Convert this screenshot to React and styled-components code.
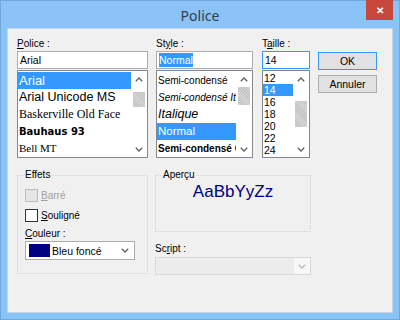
import styled, { createGlobalStyle } from "styled-components";

const GlobalStyle = createGlobalStyle`
  body {
    margin: 0;
    font-family: "Liberation Sans", Arial, sans-serif;
    font-size: 10px;
    color: #000;
  }
`;

const Chevron = ({ up, color = "#606060" }) => (
  <svg width="8" height="5" viewBox="0 0 8 5">
    <path
      d={up ? "M0.8 4.2 L4 1 L7.2 4.2" : "M0.8 0.8 L4 4 L7.2 0.8"}
      fill="none"
      stroke={color}
      strokeWidth="1.3"
    />
  </svg>
);

const fonts = [
  { name: "Arial", family: '"Liberation Sans"', size: 13, selected: true },
  { name: "Arial Unicode MS", family: '"Liberation Sans"', size: 12.5 },
  { name: "Baskerville Old Face", family: '"Liberation Serif"', size: 12 },
  { name: "Bauhaus 93", family: '"DejaVu Sans"', size: 10, weight: 900 },
  { name: "Bell MT", family: '"Liberation Serif"', size: 11 },
];

const styles = [
  { name: "Semi-condensé", size: 10 },
  { name: "Semi-condensé Italique", size: 10, italic: true },
  { name: "Italique", size: 12.5, italic: true },
  { name: "Normal", size: 11.5, selected: true },
  { name: "Semi-condensé Gras", size: 10, weight: 700 },
];

const sizes = ["12", "14", "16", "18", "20", "22", "24"];

const App = () => (
  <>
    <GlobalStyle />
    <Window>
      <TitleBar>
        <Title>Police</Title>
        <CloseButton>✕</CloseButton>
      </TitleBar>
      <Panel>
        <TopRow>
          <Column $width={131}>
            <Label>
              <u>P</u>olice :
            </Label>
            <TextBox>Arial</TextBox>
            <List>
              <Items>
                {fonts.map((f) => (
                  <Item
                    key={f.name}
                    $h={17}
                    $family={f.family}
                    $size={f.size}
                    $weight={f.weight}
                    $selected={f.selected}
                  >
                    {f.name}
                  </Item>
                ))}
              </Items>
              <ScrollBar $thumbTop={5} $thumbHeight={15} />
            </List>
          </Column>
          <Column $width={97}>
            <Label>
              St<u>y</u>le :
            </Label>
            <TextBox>
              <Highlight>Normal</Highlight>
            </TextBox>
            <List>
              <Items>
                {styles.map((s) => (
                  <Item
                    key={s.name}
                    $h={17}
                    $family='"Liberation Sans"'
                    $size={s.size}
                    $weight={s.weight}
                    $italic={s.italic}
                    $selected={s.selected}
                  >
                    {s.name}
                  </Item>
                ))}
              </Items>
              <ScrollBar $thumbTop={0} $thumbHeight={18} />
            </List>
          </Column>
          <Column $width={48}>
            <Label>
              T<u>a</u>ille :
            </Label>
            <TextBox $focused>14</TextBox>
            <List>
              <Items>
                {sizes.map((s) => (
                  <Item
                    key={s}
                    $h={12}
                    $family='"Liberation Sans"'
                    $size={10.5}
                    $selected={s === "14"}
                  >
                    {s}
                  </Item>
                ))}
              </Items>
              <ScrollBar $thumbTop={14} $thumbHeight={26} />
            </List>
          </Column>
          <ButtonColumn>
            <Button $default>OK</Button>
            <Button>Annuler</Button>
          </ButtonColumn>
        </TopRow>

        <BottomRow>
          <Group $width={131} $height={106}>
            <Legend>Effets</Legend>
            <CheckRow $disabled>
              <CheckBox $disabled />
              <span>
                <u>B</u>arré
              </span>
            </CheckRow>
            <CheckRow>
              <CheckBox />
              <span>
                <u>S</u>ouligné
              </span>
            </CheckRow>
            <SmallLabel>
              <u>C</u>ouleur :
            </SmallLabel>
            <ColorSelect>
              <Swatch />
              <SelectText>Bleu foncé</SelectText>
              <Chevron />
            </ColorSelect>
          </Group>
          <RightColumn>
            <Group $width={156} $height={64}>
              <Legend>Aperçu</Legend>
              <Preview>AaBbYyZz</Preview>
            </Group>
            <ScriptLabel>
              Sc<u>r</u>ipt :
            </ScriptLabel>
            <DisabledSelect>
              <SelectArrow>
                <Chevron color="#b8b8b8" />
              </SelectArrow>
            </DisabledSelect>
          </RightColumn>
        </BottomRow>
      </Panel>
    </Window>
  </>
);

const ScrollBar = ({ $thumbTop, $thumbHeight }) => (
  <Scroll>
    <ScrollArrow>
      <Chevron up />
    </ScrollArrow>
    <Track>
      <Thumb $top={$thumbTop} $height={$thumbHeight} />
    </Track>
    <ScrollArrow>
      <Chevron />
    </ScrollArrow>
  </Scroll>
);

const Window = styled.div`
  width: 400px;
  height: 320px;
  box-sizing: border-box;
  background: #8ac4f7;
  border: 1px solid #6ea9dc;
  display: flex;
  flex-direction: column;
`;

const TitleBar = styled.div`
  position: relative;
  height: 27px;
  display: flex;
  align-items: center;
  justify-content: center;
`;

const Title = styled.div`
  font-family: "Noto Sans", "Open Sans", sans-serif;
  font-size: 14px;
  color: #333d4c;
  margin-top: 1px;
`;

const CloseButton = styled.div`
  position: absolute;
  top: -1px;
  right: 6px;
  width: 27px;
  height: 20px;
  background: #c7473c;
  color: #fff;
  font-size: 10px;
  font-weight: bold;
  display: flex;
  align-items: center;
  justify-content: center;
`;

const Panel = styled.div`
  flex: 1;
  margin: 0 6px 6px;
  background: #f0f0f0;
  border: 1px solid #c4d6e8;
  padding: 8px 0 0 9px;
  display: flex;
  flex-direction: column;
`;

const TopRow = styled.div`
  display: flex;
  align-items: flex-start;
`;

const Column = styled.div`
  width: ${(p) => p.$width}px;
  margin-right: ${(p) => (p.$width === 97 ? 9 : 8)}px;
  display: flex;
  flex-direction: column;
`;

const Label = styled.div`
  height: 14px;
  line-height: 14px;
  font-size: 10px;
  color: #000;
`;

const TextBox = styled.div`
  height: 18px;
  box-sizing: border-box;
  border: 1px solid ${(p) => (p.$focused ? "#3399ff" : "#abadb3")};
  background: #fff;
  font-size: 10.5px;
  line-height: 16px;
  padding-left: 2px;
  white-space: nowrap;
  overflow: hidden;
`;

const Highlight = styled.span`
  background: #3399ff;
  color: #fff;
  padding: 1px 0;
`;

const List = styled.div`
  margin-top: 1px;
  height: 88px;
  box-sizing: border-box;
  border: 1px solid #828790;
  background: #fff;
  display: flex;
`;

const Items = styled.div`
  flex: 1;
  min-width: 0;
  padding-top: 1px;
  overflow: hidden;
`;

const Item = styled.div`
  height: ${(p) => p.$h}px;
  line-height: ${(p) => p.$h}px;
  padding-left: 1px;
  white-space: nowrap;
  overflow: hidden;
  font-family: ${(p) => p.$family}, sans-serif;
  font-size: ${(p) => p.$size}px;
  font-weight: ${(p) => p.$weight || 400};
  font-style: ${(p) => (p.$italic ? "italic" : "normal")};
  background: ${(p) => (p.$selected ? "#3399ff" : "transparent")};
  color: ${(p) => (p.$selected ? "#fff" : "#000")};
`;

const Scroll = styled.div`
  width: 16px;
  display: flex;
  flex-direction: column;
  background: #fff;
`;

const ScrollArrow = styled.div`
  height: 16px;
  display: flex;
  align-items: center;
  justify-content: center;
`;

const Track = styled.div`
  flex: 1;
  padding: 0 2px;
`;

const Thumb = styled.div`
  margin-top: ${(p) => p.$top}px;
  height: ${(p) => p.$height}px;
  background-color: #cdcdcd;
  background-image: repeating-linear-gradient(
    45deg,
    #c4c4c4 0 1px,
    #d6d6d6 1px 2px
  );
`;

const ButtonColumn = styled.div`
  width: 59px;
  margin-top: 15px;
  display: flex;
  flex-direction: column;
  gap: 5px;
`;

const Button = styled.div`
  height: 18px;
  box-sizing: border-box;
  border: 1px solid ${(p) => (p.$default ? "#3399ff" : "#adadad")};
  background: #e1e1e1;
  display: flex;
  align-items: center;
  justify-content: center;
  font-size: 10.5px;
`;

const BottomRow = styled.div`
  display: flex;
  gap: 7px;
  margin-top: 10px;
`;

const Group = styled.fieldset`
  margin: 0;
  width: ${(p) => p.$width}px;
  height: ${(p) => p.$height}px;
  box-sizing: border-box;
  border: 1px dotted #d2d2d2;
  padding: 0 7px;
  display: flex;
  flex-direction: column;
`;

const Legend = styled.legend`
  padding: 0 1px;
  margin-left: -1px;
  font-size: 10px;
  line-height: 14px;
`;

const CheckRow = styled.div`
  display: flex;
  align-items: center;
  gap: 3px;
  height: 13px;
  margin-top: 7px;
  font-size: 10px;
  color: ${(p) => (p.$disabled ? "#a0a0a0" : "#000")};
`;

const CheckBox = styled.div`
  width: 13px;
  height: 13px;
  box-sizing: border-box;
  border: 1px solid ${(p) => (p.$disabled ? "#bcbcbc" : "#333")};
  background: ${(p) => (p.$disabled ? "#e6e6e6" : "#fff")};
`;

const SmallLabel = styled.div`
  margin-top: 5px;
  height: 14px;
  line-height: 14px;
  font-size: 10px;
`;

const ColorSelect = styled.div`
  width: 110px;
  height: 19px;
  box-sizing: border-box;
  border: 1px solid #acacac;
  background: #fff;
  display: flex;
  align-items: center;
  padding: 0 5px 0 3px;
`;

const Swatch = styled.div`
  width: 21px;
  height: 13px;
  background: #000080;
  margin-right: 2px;
`;

const SelectText = styled.span`
  flex: 1;
  font-size: 10.5px;
`;

const RightColumn = styled.div`
  display: flex;
  flex-direction: column;
`;

const Preview = styled.div`
  flex: 1;
  display: flex;
  align-items: center;
  justify-content: center;
  padding-bottom: 6px;
  font-family: "Liberation Sans", Arial, sans-serif;
  font-size: 17px;
  color: #000080;
`;

const ScriptLabel = styled.div`
  margin-top: 10px;
  height: 14px;
  line-height: 14px;
  font-size: 10px;
`;

const DisabledSelect = styled.div`
  margin-top: 1px;
  width: 156px;
  height: 18px;
  box-sizing: border-box;
  border: 1px solid #d9d9d9;
  background: #ececec;
  display: flex;
  justify-content: flex-end;
`;

const SelectArrow = styled.div`
  width: 16px;
  background: #f7f7f7;
  display: flex;
  align-items: center;
  justify-content: center;
`;

export default App;
